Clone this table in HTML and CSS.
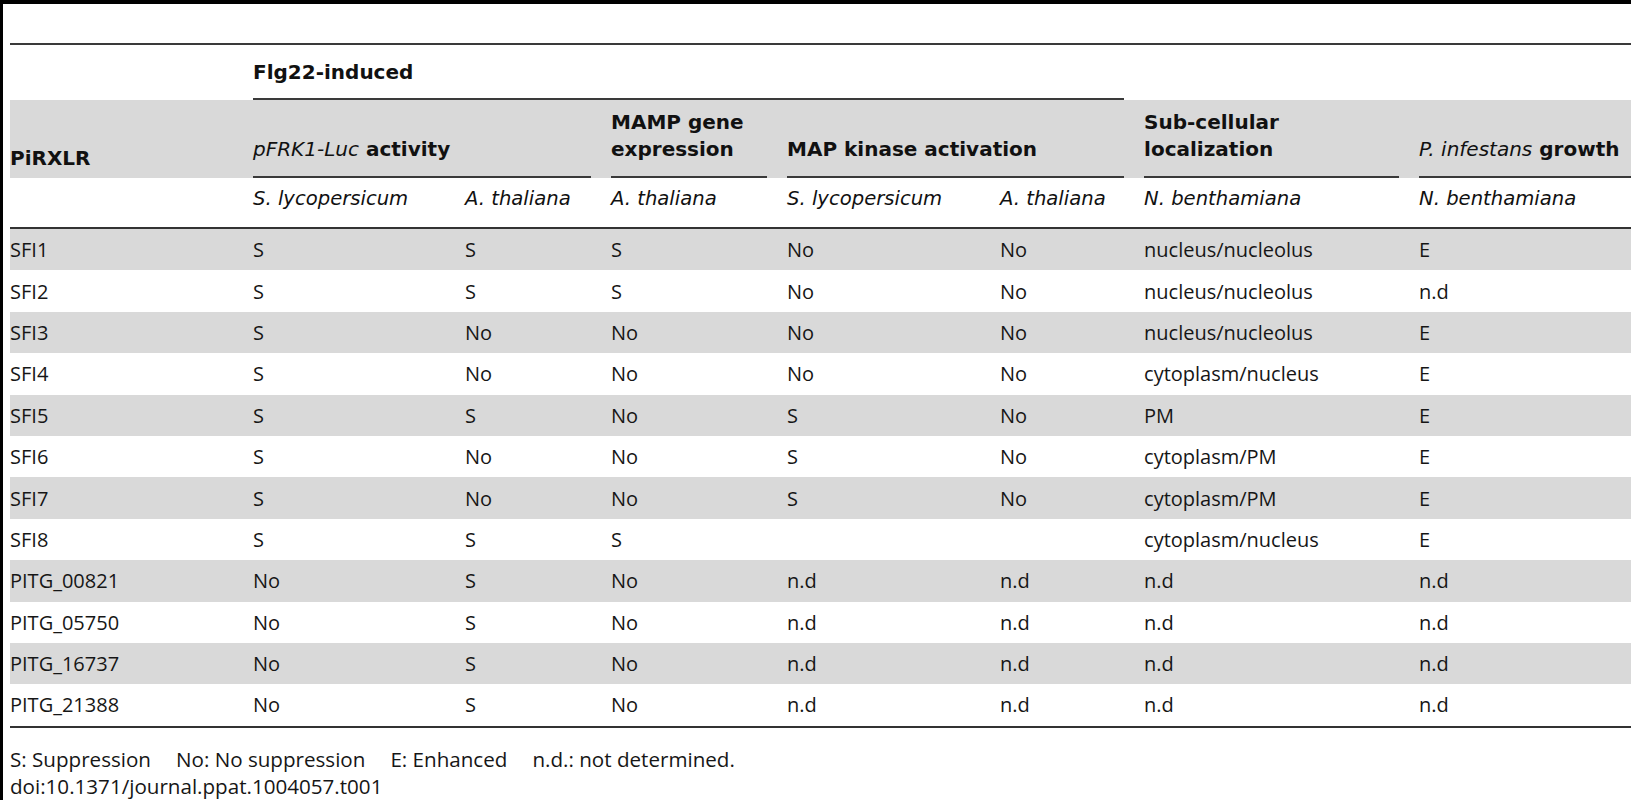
FILE: index.html
```html
<!DOCTYPE html>
<html lang="en">
<head>
<meta charset="utf-8">
<title>Table 1. Activities of PiRXLR effectors</title>
<link rel="stylesheet" href="styles.css">
</head>
<body>
<div class="page">
    <table class="tbl">
        <colgroup>
            <col class="w1"><col class="w2"><col class="w3"><col class="w4">
            <col class="w5"><col class="w6"><col class="w7"><col class="w8">
        </colgroup>
        <thead>
            <tr class="r-group">
                <th></th>
                <th colspan="5"><div class="ul">Flg22-induced</div></th>
                <th colspan="2"></th>
            </tr>
            <tr class="r-main">
                <th class="lead">PiRXLR</th>
                <th colspan="2"><div class="ul"><i>pFRK1-Luc</i> activity</div></th>
                <th><div class="ul">MAMP gene expression</div></th>
                <th colspan="2"><div class="ul">MAP kinase activation</div></th>
                <th><div class="ul">Sub-cellular localization</div></th>
                <th class="last"><div class="ul"><i>P. infestans</i> growth</div></th>
            </tr>
            <tr class="r-sub">
                <th></th>
                <th>S. lycopersicum</th>
                <th>A. thaliana</th>
                <th>A. thaliana</th>
                <th>S. lycopersicum</th>
                <th>A. thaliana</th>
                <th>N. benthamiana</th>
                <th class="last">N. benthamiana</th>
            </tr>
        </thead>
        <tbody>
            <tr><td>SFI1</td><td>S</td><td>S</td><td>S</td><td>No</td><td>No</td><td>nucleus/nucleolus</td><td>E</td></tr>
            <tr><td>SFI2</td><td>S</td><td>S</td><td>S</td><td>No</td><td>No</td><td>nucleus/nucleolus</td><td>n.d</td></tr>
            <tr><td>SFI3</td><td>S</td><td>No</td><td>No</td><td>No</td><td>No</td><td>nucleus/nucleolus</td><td>E</td></tr>
            <tr><td>SFI4</td><td>S</td><td>No</td><td>No</td><td>No</td><td>No</td><td>cytoplasm/nucleus</td><td>E</td></tr>
            <tr><td>SFI5</td><td>S</td><td>S</td><td>No</td><td>S</td><td>No</td><td>PM</td><td>E</td></tr>
            <tr><td>SFI6</td><td>S</td><td>No</td><td>No</td><td>S</td><td>No</td><td>cytoplasm/PM</td><td>E</td></tr>
            <tr><td>SFI7</td><td>S</td><td>No</td><td>No</td><td>S</td><td>No</td><td>cytoplasm/PM</td><td>E</td></tr>
            <tr><td>SFI8</td><td>S</td><td>S</td><td>S</td><td></td><td></td><td>cytoplasm/nucleus</td><td>E</td></tr>
            <tr><td>PITG_00821</td><td>No</td><td>S</td><td>No</td><td>n.d</td><td>n.d</td><td>n.d</td><td>n.d</td></tr>
            <tr><td>PITG_05750</td><td>No</td><td>S</td><td>No</td><td>n.d</td><td>n.d</td><td>n.d</td><td>n.d</td></tr>
            <tr><td>PITG_16737</td><td>No</td><td>S</td><td>No</td><td>n.d</td><td>n.d</td><td>n.d</td><td>n.d</td></tr>
            <tr><td>PITG_21388</td><td>No</td><td>S</td><td>No</td><td>n.d</td><td>n.d</td><td>n.d</td><td>n.d</td></tr>
        </tbody>
    </table>
    <div class="notes">
        <p><span class="key">S: Suppression</span><span class="key">No: No suppression</span><span class="key">E: Enhanced</span><span class="key">n.d.: not determined.</span></p>
        <p>doi:10.1371/journal.ppat.1004057.t001</p>
    </div>
</div>
</body>
</html>
```

FILE: styles.css
```css
*{
    margin:0;
    padding:0;
    box-sizing:border-box;
}
html{
    overflow:hidden;
}
body{
    background:#fff;
    color:#161616;
    font-family:"Open Sans", "Noto Sans", Arial, sans-serif;
    font-size:20px;
    line-height:27px;
}
.page{
    min-height:100vh;
    border-top:4px solid #000;
    border-left:3px solid #000;
    padding:39px 0 0 7px;
    width:1660px;
}
.tbl{
    border-collapse:separate;
    border-spacing:0;
    table-layout:fixed;
    width:1631px;
    border-top:2px solid #3a3a3a;
    border-bottom:2px solid #333;
}
.w1{ width:243px; }
.w2{ width:212px; }
.w3{ width:146px; }
.w4{ width:176px; }
.w5{ width:213px; }
.w6{ width:144px; }
.w7{ width:275px; }
.w8{ width:222px; }
th, td{
    text-align:left;
    padding:0 20px 0 0;
    white-space:nowrap;
}
th{
    font-family:"DejaVu Sans", "Open Sans", sans-serif;
    font-weight:700;
    color:#111;
}
th i{
    font-weight:400;
}
th.last{
    padding-right:0;
}
.ul{
    border-bottom:2px solid #3a3a3a;
    white-space:normal;
}
.r-group th{
    height:55px;
    vertical-align:bottom;
}
.r-group .ul{
    padding-bottom:12px;
}
.r-main{
    background:#d9d9d9;
}
.r-main th{
    height:78px;
    vertical-align:bottom;
}
.r-main .ul{
    padding-bottom:13px;
}
.r-main .lead{
    padding-bottom:6px;
}
.r-sub th{
    height:51px;
    vertical-align:top;
    padding-top:7px;
    font-size:19.6px;
    font-weight:400;
    font-style:italic;
    border-bottom:2px solid #333;
}
tbody td{
    height:41.4px;
    vertical-align:middle;
}
tbody tr:nth-child(odd){
    background:#d9d9d9;
}
.notes{
    padding-top:18px;
    font-size:20.6px;
}
.key{
    margin-right:25px;
}
```
